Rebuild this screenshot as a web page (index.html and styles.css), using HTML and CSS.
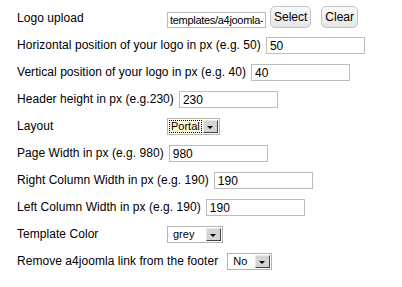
FILE: index.html
```html
<!DOCTYPE html>
<html lang="en">
<head>
	<meta charset="UTF-8">
	<title>Template parameters</title>
	<link rel="stylesheet" href="styles.css">
</head>
<body>
	<div class="params">
		<div class="param">
			<label class="key">Logo upload</label>
			<input class="text logo" type="text" value="templates/a4joomla-corporate/images/logo.png">
			<button class="btn">Select</button>
			<button class="btn clear">Clear</button>
		</div>
		<div class="param">
			<label>Horizontal position of your logo in px (e.g. 50)</label>
			<input class="text" type="text" value="50">
		</div>
		<div class="param">
			<label>Vertical position of your logo in px (e.g. 40)</label>
			<input class="text" type="text" value="40">
		</div>
		<div class="param">
			<label>Header height in px (e.g.230)</label>
			<input class="text" type="text" value="230">
		</div>
		<div class="param">
			<label class="key">Layout</label>
			<span class="select layout"><span class="value focused">Portal</span><span class="arrow"></span></span>
		</div>
		<div class="param">
			<label>Page Width in px (e.g. 980)</label>
			<input class="text" type="text" value="980">
		</div>
		<div class="param">
			<label>Right Column Width in px (e.g. 190)</label>
			<input class="text" type="text" value="190">
		</div>
		<div class="param">
			<label>Left Column Width in px (e.g. 190)</label>
			<input class="text" type="text" value="190">
		</div>
		<div class="param">
			<label class="key">Template Color</label>
			<span class="select color"><span class="value">grey</span><span class="arrow"></span></span>
		</div>
		<div class="param">
			<label class="wide">Remove a4joomla link from the footer</label>
			<span class="select footer"><span class="value">No</span><span class="arrow"></span></span>
		</div>
	</div>
</body>
</html>
```

FILE: styles.css
```css
body {
	margin: 0;
	padding: 4px 0 0 17px;
	background: #fff;
	color: #000;
	font-family: "Liberation Sans", Arial, sans-serif;
	font-size: 12px;
}
.param {
	display: flex;
	align-items: center;
	height: 27px;
	white-space: nowrap;
}
.param label {
	margin-right: 5px;
	letter-spacing: 0.05px;
}
.param label.key {
	width: 146px;
	margin-right: 4px;
}
.param label.wide {
	margin-right: 9px;
}
.text {
	box-sizing: border-box;
	width: 99px;
	height: 17px;
	margin: 2px 0 0 0;
	padding: 0 3px;
	border: 1px solid #bdbdbd;
	font-family: "Liberation Sans", Arial, sans-serif;
	font-size: 12px;
	color: #000;
	outline: none;
}
.text.logo {
	height: 16px;
	margin-top: 4px;
	padding: 0 2px;
	font-size: 11px;
	letter-spacing: -0.3px;
}
.btn {
	box-sizing: border-box;
	height: 22px;
	margin: -1px 0 0 4px;
	padding: 0 3px;
	border: 1px solid #c4c4c4;
	border-radius: 5px;
	background: linear-gradient(#fafafa, #e6e6e6);
	font-family: "Liberation Sans", Arial, sans-serif;
	font-size: 12px;
	color: #000;
}
.btn.clear {
	margin-left: 10px;
}
.select {
	box-sizing: border-box;
	display: flex;
	align-items: center;
	height: 17px;
	margin-top: 2px;
	padding: 1px;
	border: 1px solid #b4b4b4;
	background: #fff;
	font-size: 11px;
}
.select .value {
	flex: 1;
	box-sizing: border-box;
	height: 13px;
	line-height: 13px;
	padding-left: 1px;
	overflow: hidden;
}
.select .value.focused {
	border: 1px dotted #000;
	background: #fff8d6;
	line-height: 11px;
}
.select .arrow {
	position: relative;
	flex: none;
	box-sizing: border-box;
	width: 15px;
	height: 13px;
	margin-left: 1px;
	border: 1px solid;
	border-color: #e8e8e8 #404040 #404040 #e8e8e8;
	background: #d4d4d4;
}
.select .arrow::after {
	content: "";
	position: absolute;
	left: 3px;
	top: 5px;
	border-left: 3px solid transparent;
	border-right: 3px solid transparent;
	border-top: 3px solid #000;
}
.layout {
	width: 53px;
}
.color {
	width: 56px;
	padding-left: 4px;
}
.footer {
	width: 45px;
	padding-left: 4px;
}
```
